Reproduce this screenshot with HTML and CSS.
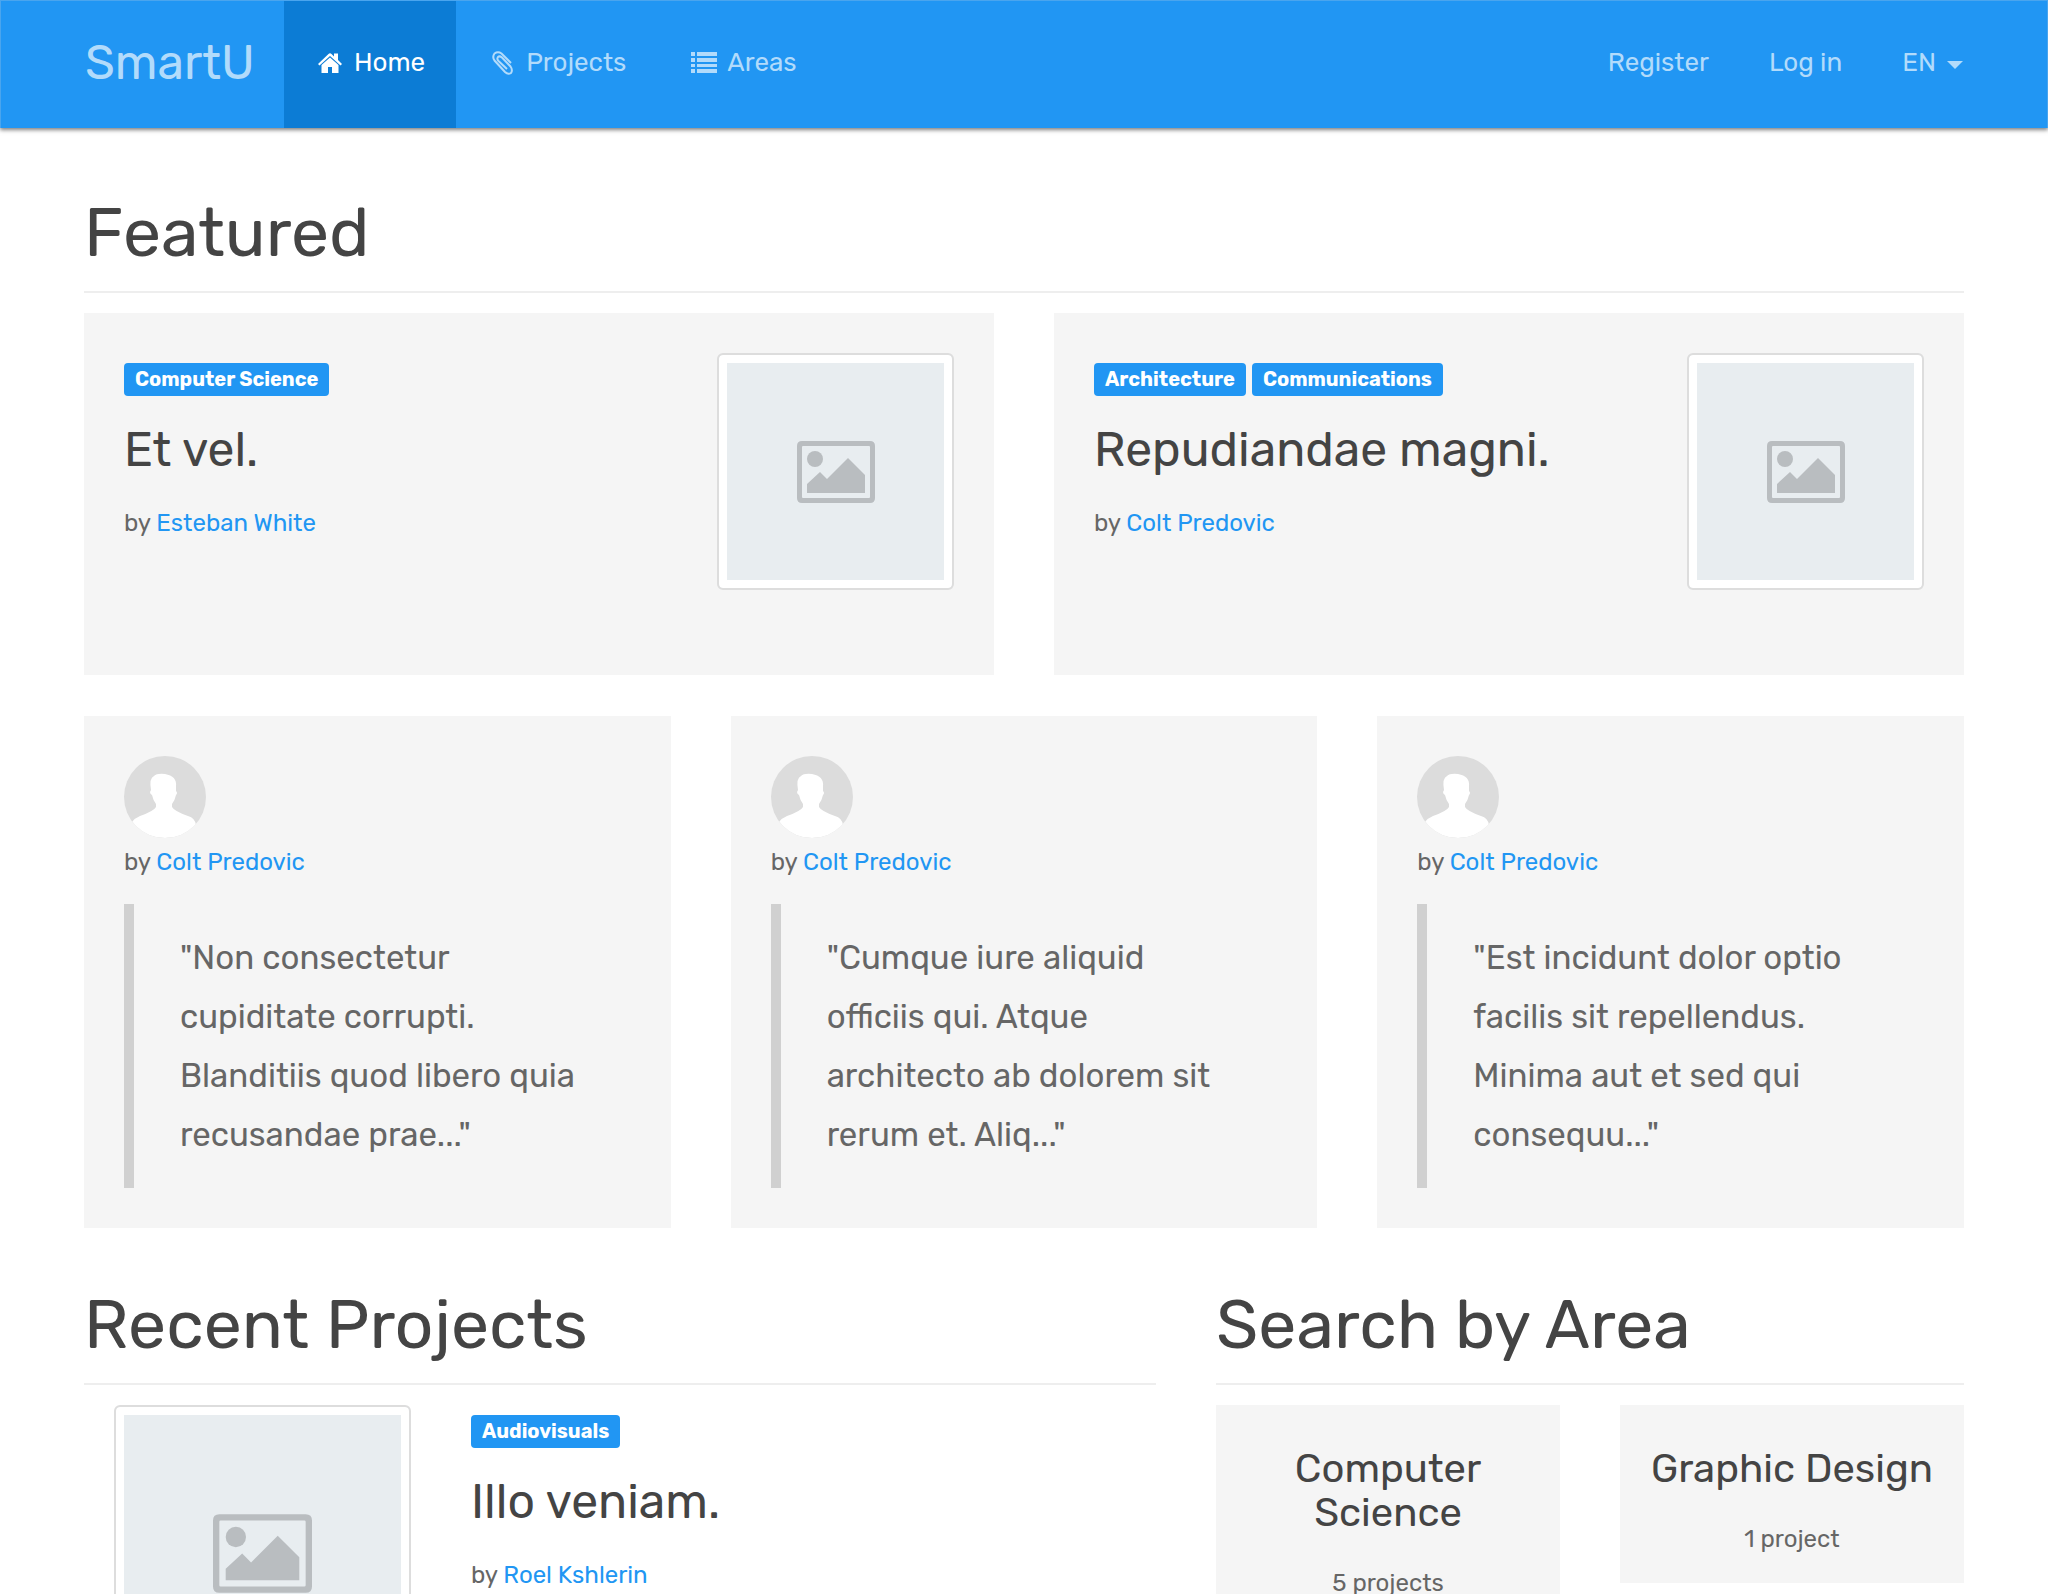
FILE: index.html
```html
<!DOCTYPE html>
<html lang="en">
<head>
<meta charset="utf-8">
<title>SmartU</title>
<link rel="stylesheet" href="styles.css">
</head>
<body>
<svg class="sprite" aria-hidden="true">
  <symbol id="picture" viewBox="0 0 78 62">
    <path fill-rule="evenodd" d="M5 0H73Q78 0 78 5V57Q78 62 73 62H5Q0 62 0 57V5Q0 0 5 0ZM6 5Q5 5 5 6V56Q5 57 6 57H72Q73 57 73 56V6Q73 5 72 5Z"/>
    <circle cx="18" cy="18" r="8"/>
    <path d="M10 52V43L23 31L30 38L51 17L68 34V52Z"/>
  </symbol>
  <symbol id="person" viewBox="0 0 82 82">
    <path fill="#fff" d="M8 66Q11 62 16 60Q30 55 32 51V48Q29 44 28 39Q26 38 26 36L27 34Q25 22 30 20Q33 17 41 18Q53 20 52 30V35Q54 37 52 39Q51 44 48 48V51Q50 55 64 60Q71 62 72 69Q60 82 41 82Q20 82 8 66Z"/>
  </symbol>
</svg>
<header class="navbar">
  <div class="navbar-inner">
    <a class="brand" href="#">SmartU</a>
    <nav class="nav nav-main">
      <a class="nav-link active" href="#">
        <svg class="icon" viewBox="0 0 26 24"><path d="M0 13L10.500 3Q12 1.500 13.500 3L16 5.500V2.500H20V9L24 13L22.500 14.500L12 5L1.500 14.500ZM12 6.500L20.500 14V22H14V16H10V22H3.500V14Z"/></svg>Home</a>
      <a class="nav-link" href="#">
        <svg class="icon clip" viewBox="0 0 26 24"><path d="M21 12L11.500 2.500Q8 0 4.500 2.500Q2 6 4.500 9.500L15 21Q18 24 21 22Q23 19 20.500 15.500L12 6.500Q9.500 4.500 8 6Q6.500 8 8.500 10L17 18"/></svg>Projects</a>
      <a class="nav-link" href="#">
        <svg class="icon" viewBox="0 0 26 24"><path d="M0 1H4V5H0ZM6 1H26V5H6ZM0 7H4V11H0ZM6 7H26V11H6ZM0 13H4V16H0ZM6 13H26V16H6ZM0 18H4V22H0ZM6 18H26V22H6Z"/></svg>Areas</a>
    </nav>
    <nav class="nav nav-right">
      <a class="nav-link" href="#">Register</a>
      <a class="nav-link" href="#">Log in</a>
      <button class="nav-link" type="button">EN<span class="caret"></span></button>
    </nav>
  </div>
</header>
<main class="container">
  <section>
    <h1>Featured</h1>
    <div class="grid two">
      <article class="card feature">
        <div>
          <div class="labels"><span class="label">Computer Science</span></div>
          <h2>Et vel.</h2>
          <p>by <a href="#">Esteban White</a></p>
        </div>
        <div class="thumb"><svg><use href="#picture"/></svg></div>
      </article>
      <article class="card feature">
        <div>
          <div class="labels"><span class="label">Architecture</span><span class="label">Communications</span></div>
          <h2>Repudiandae magni.</h2>
          <p>by <a href="#">Colt Predovic</a></p>
        </div>
        <div class="thumb"><svg><use href="#picture"/></svg></div>
      </article>
    </div>
    <div class="grid three">
      <article class="card">
        <svg class="avatar"><use href="#person"/></svg>
        <p>by <a href="#">Colt Predovic</a></p>
        <blockquote>"Non consectetur<br>cupiditate corrupti.<br>Blanditiis quod libero quia<br>recusandae prae..."</blockquote>
      </article>
      <article class="card">
        <svg class="avatar"><use href="#person"/></svg>
        <p>by <a href="#">Colt Predovic</a></p>
        <blockquote>"Cumque iure aliquid<br>officiis qui. Atque<br>architecto ab dolorem sit<br>rerum et. Aliq..."</blockquote>
      </article>
      <article class="card">
        <svg class="avatar"><use href="#person"/></svg>
        <p>by <a href="#">Colt Predovic</a></p>
        <blockquote>"Est incidunt dolor optio<br>facilis sit repellendus.<br>Minima aut et sed qui<br>consequu..."</blockquote>
      </article>
    </div>
  </section>
  <div class="lower">
    <section>
      <h1>Recent Projects</h1>
      <article class="project">
        <div class="thumb large"><svg><use href="#picture"/></svg></div>
        <div>
          <div class="labels"><span class="label">Audiovisuals</span></div>
          <h2>Illo veniam.</h2>
          <p>by <a href="#">Roel Kshlerin</a></p>
        </div>
      </article>
    </section>
    <section>
      <h1>Search by Area</h1>
      <div class="grid two areas">
        <article class="area"><h3>Computer Science</h3><p>5 projects</p></article>
        <article class="area"><h3>Graphic Design</h3><p>1 project</p></article>
      </div>
    </section>
  </div>
</main>
</body>
</html>
```
FILE: styles.css
```css
* { box-sizing: border-box; }
html { scrollbar-width: none; }
body {
  margin: 0;
  background: #fff;
  color: #666;
  font: 24px/44px Rubik, Inter, sans-serif;
}
a { color: #2196f3; text-decoration: none; }
h1, h2, h3, p, blockquote { margin: 0; font-weight: 400; }
h1, h2, h3 { color: #444; }
.sprite { position: absolute; width: 0; height: 0; }

.navbar {
  height: 128px;
  padding: 0 84px;
  background: #2196f3;
  border: 1px solid #4aa5ee;
  border-bottom: 0;
  box-shadow: 0 2px 4px rgba(0, 0, 0, .5);
}
.navbar-inner { display: flex; height: 100%; }
.brand {
  width: 199px;
  font-size: 48px;
  line-height: 124px;
  color: #b2dbfb;
}
.nav { display: flex; }
.nav-right { margin-left: auto; margin-right: -30px; }
.nav-link {
  display: flex;
  align-items: center;
  padding: 0 30px 3px;
  border: 0;
  background: none;
  color: #b2dbfb;
  font: 26px/40px Rubik, Inter, sans-serif;
}
.nav-main .nav-link { padding-left: 34px; padding-right: 31px; }
.nav-link.active { background: #0c7cd5; color: #fff; }
.icon { width: 26px; height: 24px; margin-right: 10px; fill: currentColor; }
.clip { fill: none; stroke: currentColor; stroke-width: 2; }
.caret {
  margin: 4px 0 0 11px;
  border: 8px solid transparent;
  border-top-color: currentColor;
  border-bottom: 0;
}

.container { padding: 63px 84px 0; }
h1 {
  height: 102px;
  margin-bottom: 20px;
  border-bottom: 2px solid #eee;
  font-size: 68px;
  line-height: 84px;
}
h2 { margin-bottom: 25px; font-size: 48px; line-height: 52px; }
.grid { display: grid; gap: 60px; }
.two { grid-template-columns: repeat(2, minmax(0, 1fr)); }
.three { grid-template-columns: repeat(3, minmax(0, 1fr)); margin-top: 41px; }
.card { background: #f5f5f5; padding: 40px; }
.feature {
  display: flex;
  justify-content: space-between;
  min-height: 362px;
}
.thumb {
  display: flex;
  align-items: center;
  justify-content: center;
  flex: none;
  width: 237px;
  height: 237px;
  border: 2px solid #ddd;
  border-radius: 6px;
  background: #e8edf0;
  box-shadow: inset 0 0 0 8px #fff;
  fill: #b9bdc0;
}
.thumb svg { width: 78px; height: 62px; }
.labels { display: flex; gap: 6px; padding: 10px 0 28px; }
.label {
  padding: 0 11px;
  border-radius: 4px;
  background: #2196f3;
  color: #fff;
  font-size: 20px;
  font-weight: 700;
  line-height: 33px;
}
.avatar {
  display: block;
  width: 82px;
  height: 82px;
  margin-bottom: 2px;
  border-radius: 50%;
  background: #dcdcdc;
}
blockquote {
  margin-top: 20px;
  padding: 24px 46px;
  border-left: 10px solid #d0d0d0;
  font-size: 33px;
  line-height: 59px;
}
.lower {
  display: grid;
  grid-template-columns: 43fr 30fr;
  gap: 60px;
  margin-top: 55px;
}
.project { display: flex; gap: 60px; padding-left: 30px; }
.thumb.large { width: 297px; height: 297px; }
.thumb.large svg { width: 99px; height: 79px; }
.areas { align-items: start; }
.area { padding: 42px 24px 22px; background: #f5f5f5; text-align: center; }
h3 { margin-bottom: 26px; font-size: 40px; line-height: 44px; }
```
